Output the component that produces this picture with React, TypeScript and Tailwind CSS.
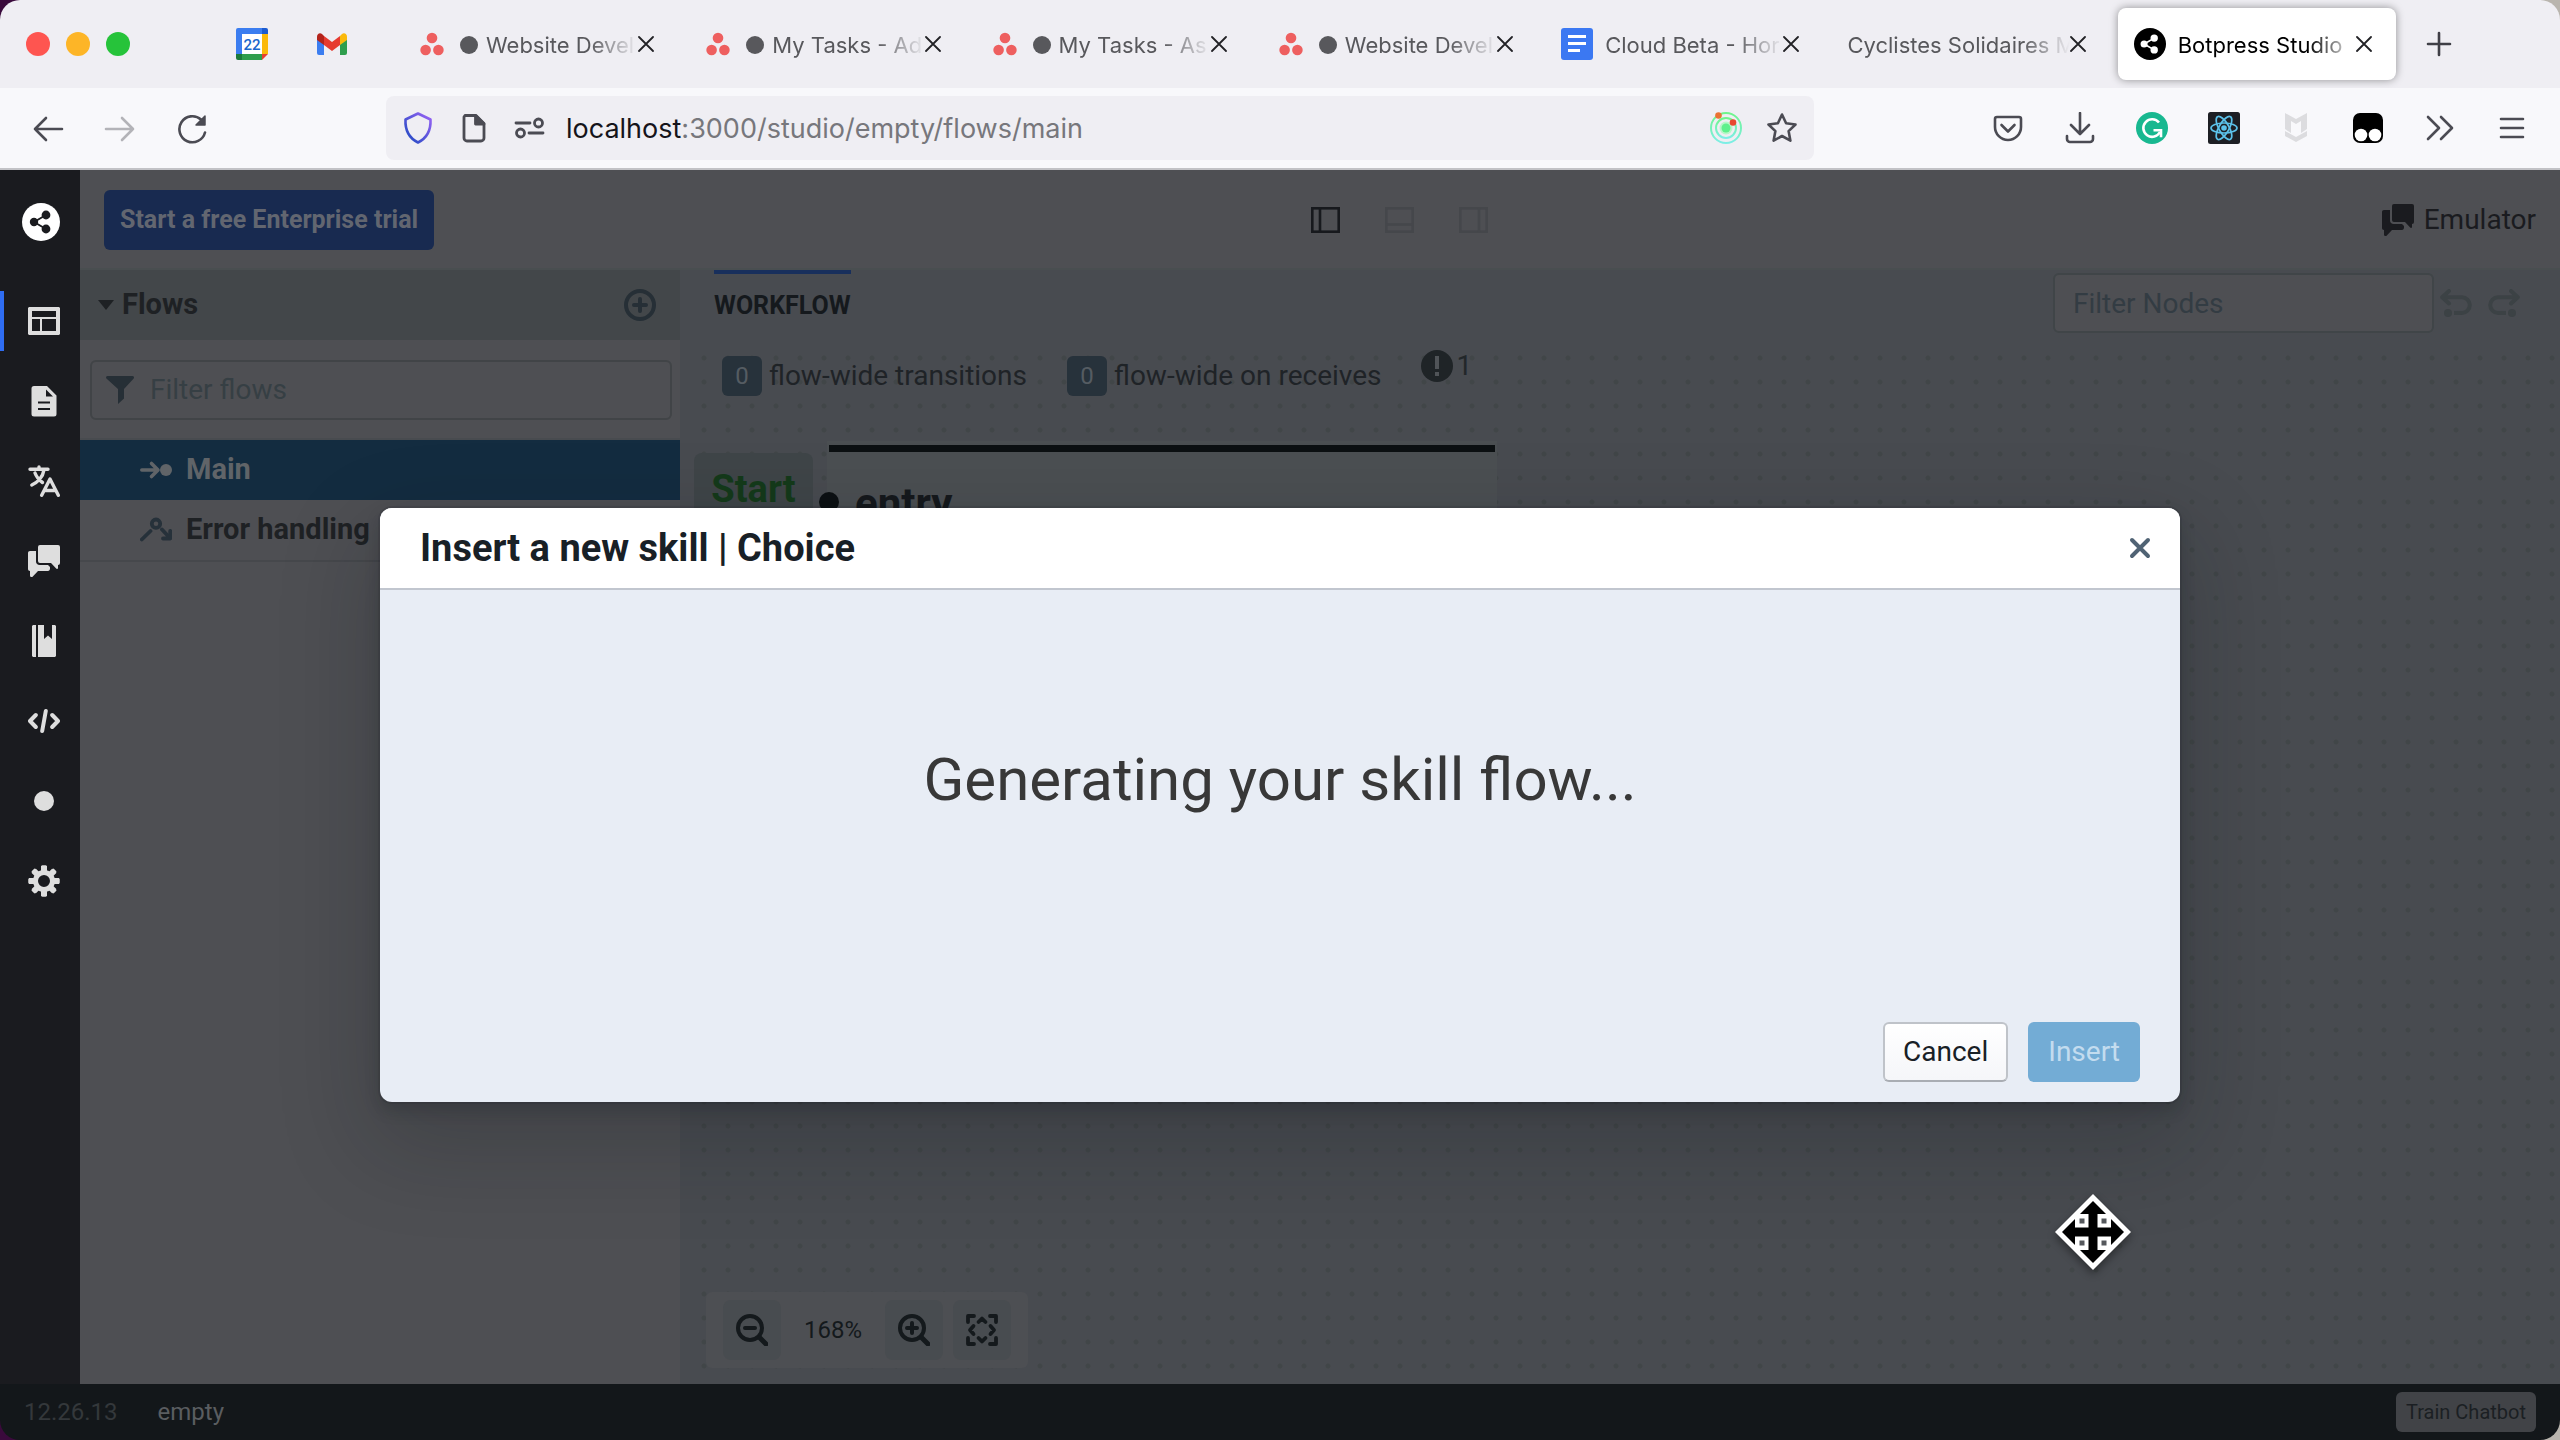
import React from 'react';

type IconProps = { className?: string };

/* ---------- browser icons ---------- */

const CalendarIcon = () => (
  <svg viewBox="0 0 32 32" className="size-8 shrink-0" aria-hidden="true">
    <path d="M2 0h24v6H6v20H0V2a2 2 0 0 1 2-2z" fill="#3b7df0" />
    <path d="M26 0h4a2 2 0 0 1 2 2v4h-6z" fill="#1c5bd0" />
    <path d="M26 6h6v20h-6z" fill="#fbb90a" />
    <path d="M6 26h20v6H6z" fill="#2f9e4d" />
    <path d="M0 26h6v6H2a2 2 0 0 1-2-2z" fill="#1b7a3b" />
    <path d="M26 26h6l-6 6z" fill="#e8402f" />
    <path d="M6 6h20v20H6z" fill="#fff" />
    <text x="16" y="21.5" textAnchor="middle" fontFamily="Roboto, sans-serif" fontSize="15" fontWeight="500" fill="#1a66cc">
      22
    </text>
  </svg>
);

const GmailIcon = () => (
  <svg viewBox="0 0 32 32" className="size-8 shrink-0" aria-hidden="true">
    <path d="M1 11l7 5v11H3a2 2 0 0 1-2-2z" fill="#3b7df0" />
    <path d="M31 11l-7 5v11h5a2 2 0 0 0 2-2z" fill="#2f9e4d" />
    <path d="M24 8l2-2c2-1.500 5-.5 5 3v3l-7 5z" fill="#fbb90a" />
    <path d="M8 8L6 6C4 4.500 1 5.500 1 9v3l7 5z" fill="#b3231b" />
    <path d="M8 8l8 6 8-6v9l-8 6-8-6z" fill="#e63a2f" />
  </svg>
);

const AsanaIcon = () => (
  <svg viewBox="0 0 32 32" className="size-8 shrink-0" fill="#ee5f5f" aria-hidden="true">
    <circle cx="16" cy="10" r="5.300" />
    <circle cx="9.600" cy="22" r="5.300" />
    <circle cx="22.400" cy="22" r="5.300" />
  </svg>
);

const DocsIcon = () => (
  <svg viewBox="0 0 32 32" className="size-8 shrink-0" aria-hidden="true">
    <rect width="32" height="32" rx="3" fill="#3b78f2" />
    <path d="M7 8.500h18M7 15.500h18M7 22.500h12" stroke="#fff" strokeWidth="3" />
  </svg>
);

const BotpressIcon = ({ className, disc, mark }: IconProps & { disc: string; mark: string }) => (
  <svg viewBox="0 0 38 38" className={className} aria-hidden="true">
    <circle cx="19" cy="19" r="19" fill={disc} />
    <path d="M12 19l12-7M12 19l12 7" stroke={mark} strokeWidth="2" />
    <circle cx="12" cy="19" r="4.200" fill={mark} />
    <circle cx="24" cy="12" r="4.400" fill={mark} />
    <circle cx="24" cy="26" r="4.400" fill={mark} />
  </svg>
);

const CloseIcon = () => (
  <svg viewBox="0 0 16 16" className="size-4" fill="none" stroke="#222226" strokeWidth="1.800" strokeLinecap="round" aria-hidden="true">
    <path d="M1 1l14 14M15 1L1 15" />
  </svg>
);

const Line = ({ children, className = 'size-8', width = 2.6 }: { children: React.ReactNode; className?: string; width?: number }) => (
  <svg
    viewBox="0 0 32 32"
    className={className}
    fill="none"
    stroke="currentColor"
    strokeWidth={width}
    strokeLinecap="round"
    strokeLinejoin="round"
    aria-hidden="true"
  >
    {children}
  </svg>
);

const ReactLogo = () => (
  <svg viewBox="0 0 32 32" className="size-8" aria-hidden="true">
    <rect width="32" height="32" rx="2.500" fill="#1d1f24" />
    <g fill="none" stroke="#5cc2ea" strokeWidth="1.700">
      <ellipse cx="16" cy="16" rx="13" ry="5" />
      <ellipse cx="16" cy="16" rx="13" ry="5" transform="rotate(60 16 16)" />
      <ellipse cx="16" cy="16" rx="13" ry="5" transform="rotate(120 16 16)" />
    </g>
    <circle cx="16" cy="16" r="2.800" fill="#5cc2ea" />
  </svg>
);

const GrammarlyIcon = () => (
  <svg viewBox="0 0 32 32" className="size-8" aria-hidden="true">
    <circle cx="16" cy="16" r="16" fill="#18b890" />
    <path d="M23 10.500a8.800 8.800 0 1 0 1 9.500" fill="none" stroke="#fff" strokeWidth="2.600" />
    <path d="M17.500 18.200H25v7" fill="none" stroke="#fff" strokeWidth="2.600" />
  </svg>
);

const RadarIcon = () => (
  <svg viewBox="0 0 32 32" className="size-8" aria-hidden="true">
    <defs>
      <linearGradient id="radar" x1="0" y1="0" x2="0" y2="1">
        <stop offset="0" stopColor="#6ff58a" />
        <stop offset="1" stopColor="#7deee6" />
      </linearGradient>
    </defs>
    <g fill="none" stroke="url(#radar)" strokeWidth="2">
      <circle cx="16" cy="16" r="15" />
      <circle cx="16" cy="16" r="10" />
    </g>
    <circle cx="16" cy="16" r="6.500" fill="#b8f7c9" />
    <circle cx="16" cy="16" r="4.500" fill="#5ff08c" />
    <circle cx="8.500" cy="3.500" r="3.300" fill="#ea7233" />
    <circle cx="23" cy="10.500" r="3.300" fill="#e8492f" />
  </svg>
);

const McAfeeIcon = () => (
  <svg viewBox="0 0 32 32" className="size-8" fill="#dcdcdf" aria-hidden="true">
    <path d="M5 1l11 6 11-6v16l-6 4V9l-5 3-5-3v12l-6-4z" />
    <path d="M5 19l11 6 11-6v5l-11 6-11-6z" />
  </svg>
);

const TamperIcon = () => (
  <svg viewBox="0 0 32 32" className="size-8" aria-hidden="true">
    <rect x="1" y="1" width="30" height="30" rx="7" fill="#000" />
    <circle cx="9" cy="23" r="6.300" fill="#fff" />
    <circle cx="23" cy="23" r="6.300" fill="#fff" />
  </svg>
);

/* ---------- studio icons ---------- */

const ChatIcon = ({ className = 'size-8' }: IconProps) => (
  <svg viewBox="0 0 16 16" className={className} fill="currentColor" aria-hidden="true">
    <path d="M6 0h9a1 1 0 0 1 1 1v8a1 1 0 0 1-1 1v1.500a.5.5 0 0 1-.9.3L11.500 9H6a1 1 0 0 1-1-1V1a1 1 0 0 1 1-1z" />
    <path d="M1 3h3v5.200C4 9.200 4.800 10 5.800 10H10l1 1v.9c0 .6-.4 1.100-1 1.100H5l-2.600 2.700c-.5.600-1.400.3-1.400-.5V13c-.6 0-1-.4-1-1V4c0-.6.4-1 1-1z" />
  </svg>
);

const LayoutIcon = () => (
  <svg viewBox="0 0 32 32" className="size-8" fill="currentColor" fillRule="evenodd" aria-hidden="true">
    <path d="M1 2h30l1 1v26l-1 1H1l-1-1V3zM4 6v6h24V6zM4 14v12h8V14zM14 14v12h14V14z" />
  </svg>
);

const DocumentIcon = () => (
  <svg viewBox="0 0 32 32" className="size-8" fill="currentColor" fillRule="evenodd" aria-hidden="true">
    <path d="M6 1h13l9.500 9.500V29a2.500 2.500 0 0 1-2.500 2.500H6A2.500 2.500 0 0 1 3.500 29V3.500A2.500 2.500 0 0 1 6 1zM18 4.500v7h7zM10 16.500v2h12v-2zM10 23v2h12v-2z" />
  </svg>
);

const TranslateIcon = () => (
  <Line width={3.4}>
    <path d="M2 4.300h18M11 2v2M15.800 5.500C15 12 9.500 17.500 3.800 20M7 8c1.500 4 4 7 7.500 9.500" />
    <path d="M13.700 30.300L22 14l8.300 16.300M17 25.500h10" />
  </Line>
);

const NotebookIcon = () => (
  <svg viewBox="0 0 32 32" className="size-8" fill="currentColor" aria-hidden="true">
    <path d="M5 0h3v32H5l-1-1V1z" />
    <path d="M10 0h6v14l4-3.500 4 3.500V0h3l1 1v30l-1 1H10z" />
  </svg>
);

const CodeIcon = () => (
  <Line width={4}>
    <path d="M7.800 10L2 16l5.800 6M24.200 10L30 16l-5.800 6M17.800 6l-3.600 20" />
  </Line>
);

const DotIcon = () => (
  <svg viewBox="0 0 32 32" className="size-8" fill="currentColor" aria-hidden="true">
    <circle cx="16" cy="16" r="10" />
  </svg>
);

const CogIcon = () => (
  <svg viewBox="0 0 32 32" className="size-8" fill="none" stroke="currentColor" aria-hidden="true">
    <circle cx="16" cy="16" r="8.500" strokeWidth="5" />
    <path
      d="M16 1v6M16 25v6M1 16h6M25 16h6M5.800 5.800l3.800 3.800M22.400 22.400l3.800 3.800M26.200 5.800l-3.800 3.800M9.600 22.400l-3.800 3.800"
      strokeWidth="6"
    />
    <path d="M14.500 1.500h3M14.500 30.500h3M1.500 14.500v3M30.500 14.500v3" strokeWidth="2.500" strokeLinecap="round" />
    <path d="M4.800 6.800l2-2M27.200 6.800l-2-2M4.800 25.200l2 2M27.200 25.200l-2 2" strokeWidth="2.500" strokeLinecap="round" />
  </svg>
);

const AddRingIcon = () => (
  <Line width={4}>
    <circle cx="16" cy="16" r="14" />
    <path d="M16 10v12M10 16h12" />
  </Line>
);

const FunnelIcon = () => (
  <svg viewBox="0 0 28 28" className="size-7 shrink-0" fill="currentColor" aria-hidden="true">
    <path d="M1.500 0h25a1.500 1.500 0 0 1 1.200 2.400L18 13v9.500L12 28V13L.4 2.400A1.500 1.500 0 0 1 1.500 0z" />
  </svg>
);

const StartFlowIcon = () => (
  <Line width={3.6}>
    <path d="M1.800 16H17M11.500 9.500L18 16l-6.500 6.500" />
    <circle cx="26" cy="16" r="6" fill="currentColor" stroke="none" />
  </Line>
);

const ErrorFlowIcon = () => (
  <Line width={3.8}>
    <circle cx="16" cy="9.700" r="4.200" />
    <path d="M1.800 25.500l8.700-8.500M22 15.500l7 7.500M30.200 17v7.500H23" />
  </Line>
);

const UndoIcon = ({ className = '' }: IconProps) => (
  <svg viewBox="0 0 32 28" className={`h-7 w-8 ${className}`} fill="none" stroke="currentColor" strokeWidth="4" strokeLinecap="round" strokeLinejoin="round" aria-hidden="true">
    <path d="M9 2L2.200 8.300 9 14.500M3 8.300h19a7.800 7.800 0 0 1 0 15.600" />
    <path d="M22 23.900h-8" strokeLinecap="butt" />
    <circle cx="8" cy="24" r="4" fill="currentColor" stroke="none" />
  </svg>
);

const PanelIcon = ({ side, className }: { side: 'left' | 'bottom' | 'right'; className: string }) => (
  <svg viewBox="0 0 29 26" className={`h-[26px] w-[29px] ${className}`} fill="none" stroke="currentColor" strokeWidth="2.600" aria-hidden="true">
    <rect x="1.300" y="1.300" width="26.400" height="23.400" />
    {side === 'left' && <path d="M9 1v24" />}
    {side === 'right' && <path d="M20 1v24" />}
    {side === 'bottom' && <path d="M1 17.500h27" />}
  </svg>
);

const ZoomIcon = ({ plus }: { plus?: boolean }) => (
  <Line width={4}>
    <circle cx="14" cy="14" r="12" />
    <path d={plus ? 'M9 14h10M14 9v10' : 'M9 14h10'} />
    <path d="M24 24l6 6" strokeWidth="5" />
  </Line>
);

const FitIcon = () => (
  <Line width={3.8}>
    <path d="M2 8V2h6M24 2h6v6M30 24v6h-6M8 30H2v-6" />
    <path d="M12.500 8L16 4.500 19.500 8M12.500 24l3.500 3.500 3.500-3.500M7.500 12L4 16l3.500 4M24.500 12l3.500 4-3.500 4" />
  </Line>
);

const MoveCursor = () => (
  <svg viewBox="-42 -42 84 90" className="h-[90px] w-[84px] drop-shadow-[0_4px_4px_rgba(0,0,0,0.4)]" aria-hidden="true">
    <path d="M0-38L38 0 0 38-38 0z" fill="#fff" />
    <path d="M0-31L31 0 0 31-31 0z" fill="#000" />
    <path d="M-18-18h13.500v13.500H-18zM4.500-18H18v13.500H4.500zM-18 4.500h13.500V18H-18zM4.500 4.500H18V18H4.500z" fill="#fff" />
    <path d="M-13.500-13.500h5v5h-5zM8.500-13.500h5v5h-5zM-13.500 8.500h5v5h-5zM8.500 8.500h5v5h-5z" fill="#55585c" />
  </svg>
);

/* ---------- browser chrome ---------- */

type Tab = { title: string; icon?: React.ReactNode; unread?: boolean; active?: boolean };

const tabs: Tab[] = [
  { title: 'Website Devel', icon: <AsanaIcon />, unread: true },
  { title: 'My Tasks - Ad', icon: <AsanaIcon />, unread: true },
  { title: 'My Tasks - As', icon: <AsanaIcon />, unread: true },
  { title: 'Website Devel', icon: <AsanaIcon />, unread: true },
  { title: 'Cloud Beta - Hor', icon: <DocsIcon /> },
  { title: 'Cyclistes Solidaires M' },
  { title: 'Botpress Studio', icon: <BotpressIcon className="size-8 shrink-0" disc="#000" mark="#fff" />, active: true },
];

const TabStrip = () => (
  <div className="flex h-[88px] items-center bg-[#efeef3]">
    <div className="flex w-[396px] shrink-0 items-center pl-[26px]">
      <div className="flex gap-4">
        <span className="size-6 rounded-full bg-[#fe5550]" />
        <span className="size-6 rounded-full bg-[#fdb527]" />
        <span className="size-6 rounded-full bg-[#26c33a]" />
      </div>
      <button className="ml-[106px]" aria-label="Calendar">
        <CalendarIcon />
      </button>
      <button className="ml-12" aria-label="Gmail">
        <GmailIcon />
      </button>
    </div>
    <div className="flex min-w-0 flex-1">
      {tabs.map((tab, i) => (
        <div
          key={i}
          className={
            tab.active
              ? 'mx-1 flex h-[72px] min-w-0 flex-1 items-center rounded-lg bg-white pr-6 pl-4 text-black shadow-[0_0_8px_rgba(0,0,0,0.4)]'
              : 'mx-1 flex h-[72px] min-w-0 flex-1 items-center pr-6 pl-4 text-[#58585c]'
          }
        >
          {tab.icon}
          <div
            className={
              tab.icon
                ? 'ml-3 flex min-w-0 flex-1 items-center gap-2 overflow-hidden pt-[2px] whitespace-nowrap [mask-image:linear-gradient(to_right,black_calc(100%-48px),transparent)]'
                : 'flex min-w-0 flex-1 items-center gap-2 overflow-hidden pt-[2px] whitespace-nowrap [mask-image:linear-gradient(to_right,black_calc(100%-48px),transparent)]'
            }
          >
            {tab.unread && <span className="size-[18px] shrink-0 rounded-full bg-[#58585c]" />}
            <span className="text-[22px] leading-8">{tab.title}</span>
          </div>
          <button className="shrink-0" aria-label={`Close ${tab.title}`}>
            <CloseIcon />
          </button>
        </div>
      ))}
    </div>
    <button className="mr-[105px] ml-[23px] text-[#3f3f46]" aria-label="New tab">
      <Line>
        <path d="M16 5v22M5 16h22" />
      </Line>
    </button>
  </div>
);

const AddressBar = () => (
  <div className="flex h-[82px] items-center border-b-2 border-[#c2c2c6] bg-[#f8f8fb] text-[#4b4b53]">
    <div className="flex w-[386px] shrink-0 items-center gap-10 pl-8">
      <button aria-label="Back">
        <Line>
          <path d="M3 17h27M14 6L3 17l11 11" />
        </Line>
      </button>
      <button className="text-[#b3b3b8]" aria-label="Forward">
        <Line>
          <path d="M29 17H2M18 6l11 11-11 11" />
        </Line>
      </button>
      <button aria-label="Reload">
        <Line>
          <path d="M29 20.500A13 13 0 1 1 25 7.500" />
          <path d="M29 4v9h-9z" fill="currentColor" strokeWidth="1.500" />
        </Line>
      </button>
    </div>
    <div className="flex h-16 min-w-0 flex-1 items-center rounded-lg bg-[#efeef3] px-4">
      <svg viewBox="0 0 32 32" className="size-8 shrink-0" fill="none" strokeWidth="2.600" strokeLinejoin="round" aria-hidden="true">
        <defs>
          <linearGradient id="shield" x1="0" y1="1" x2="1" y2="0">
            <stop offset="0" stopColor="#1b49c0" />
            <stop offset="1" stopColor="#9a63f5" />
          </linearGradient>
        </defs>
        <path d="M16 1.500l12.500 6C29 18 25 26 16 30.500 7 26 3 18 3.500 7.500z" stroke="url(#shield)" />
      </svg>
      <svg viewBox="0 0 32 32" className="ml-6 size-8 shrink-0" fill="none" stroke="currentColor" strokeWidth="2.800" strokeLinejoin="round" aria-hidden="true">
        <path d="M7 3.500h11l8 8V26a3 3 0 0 1-3 3H9a3 3 0 0 1-3-3V5z" />
        <path d="M17.500 3.500V12H26z" fill="currentColor" />
      </svg>
      <span className="ml-6 shrink-0">
        <Line width={2.8}>
          <path d="M2 11h14M15 21h14" />
          <circle cx="24.500" cy="11" r="4" />
          <circle cx="6.500" cy="21" r="4" />
        </Line>
      </span>
      <p className="ml-5 min-w-0 flex-1 truncate pt-[2px] text-[27px] leading-10 text-[#77777c]">
        <span className="text-[#15141a]">localhost</span>:3000/studio/empty/flows/main
      </p>
      <RadarIcon />
      <button className="ml-6" aria-label="Bookmark this page">
        <Line>
          <path d="M16 2.500l4.100 8.800 9.400 1.200-6.900 6.600 1.800 9.600L16 24l-8.400 4.700 1.800-9.600-6.900-6.600 9.400-1.200z" />
        </Line>
      </button>
    </div>
    <div className="flex w-[746px] shrink-0 items-center justify-end gap-10 pr-8">
      <button aria-label="Save to Pocket">
        <Line>
          <path d="M5 5h22a2 2 0 0 1 2 2v8a13 13 0 0 1-26 0V7a2 2 0 0 1 2-2z" />
          <path d="M9.500 13l6.500 6.500 6.500-6.500" />
        </Line>
      </button>
      <button aria-label="Downloads">
        <Line>
          <path d="M16 1v20M7 13l9 9 9-9M3 24v3a3 3 0 0 0 3 3h20a3 3 0 0 0 3-3v-3" />
        </Line>
      </button>
      <button aria-label="Grammarly">
        <GrammarlyIcon />
      </button>
      <button aria-label="React developer tools">
        <ReactLogo />
      </button>
      <button aria-label="McAfee">
        <McAfeeIcon />
      </button>
      <button aria-label="Tampermonkey">
        <TamperIcon />
      </button>
      <button aria-label="More tools">
        <Line>
          <path d="M4 5l11 11L4 27M17 5l11 11-11 11" />
        </Line>
      </button>
      <button aria-label="Open menu">
        <Line>
          <path d="M5 7h22M5 16h22M5 25h22" />
        </Line>
      </button>
    </div>
  </div>
);

/* ---------- studio ---------- */

const railItems = [
  { label: 'Flows', icon: <LayoutIcon />, active: true },
  { label: 'Content', icon: <DocumentIcon /> },
  { label: 'Translations', icon: <TranslateIcon /> },
  { label: 'Q&A', icon: <ChatIcon /> },
  { label: 'Library', icon: <NotebookIcon /> },
  { label: 'Code editor', icon: <CodeIcon /> },
  { label: 'Status', icon: <DotIcon /> },
  { label: 'Settings', icon: <CogIcon /> },
];

const Rail = () => (
  <nav className="flex w-20 shrink-0 flex-col bg-[#1a1b1f] pt-[33px] text-[#dedede]">
    <button className="ml-[22px] self-start" aria-label="Botpress home">
      <BotpressIcon className="size-[38px]" disc="#fff" mark="#1a1b1f" />
    </button>
    <ul className="mt-[50px] flex flex-col gap-5">
      {railItems.map((item) => (
        <li key={item.label}>
          <button
            aria-label={item.label}
            className={
              item.active
                ? 'flex h-[60px] w-full items-center border-l-4 border-[#2f6df2] pl-6'
                : 'flex h-[60px] w-full items-center border-l-4 border-transparent pl-6'
            }
          >
            {item.icon}
          </button>
        </li>
      ))}
    </ul>
  </nav>
);

const StudioHeader = () => (
  <header className="flex h-[100px] items-center justify-between border-b-2 border-[#494e50] bg-[#4e4f53] pt-[2px] pr-6 pl-6">
    <button className="h-[60px] rounded-md bg-[#182a50] px-4 text-[25px] font-bold text-[#626670]">Start a free Enterprise trial</button>
    <div className="flex gap-[45px]">
      <button aria-label="Toggle left panel">
        <PanelIcon side="left" className="text-[#17191d]" />
      </button>
      <button aria-label="Toggle bottom panel">
        <PanelIcon side="bottom" className="text-[#45474b]" />
      </button>
      <button aria-label="Toggle right panel">
        <PanelIcon side="right" className="text-[#45474b]" />
      </button>
    </div>
    <button className="flex items-center gap-[10px] pl-4 text-[28px] text-[#1a1b1f]">
      <ChatIcon />
      Emulator
    </button>
  </header>
);

const FlowList = () => (
  <aside className="w-[600px] shrink-0 bg-[#4e4f53]">
    <div className="flex h-[70px] items-center bg-[#43474a] pr-6 pl-[18px]">
      <svg viewBox="0 0 16 10" className="h-[10px] w-4" fill="#1e2124" aria-hidden="true">
        <path d="M0 0h16L8 10z" />
      </svg>
      <h2 className="ml-2 flex-1 text-[29px] font-bold text-[#1e2124]">Flows</h2>
      <button className="text-[#262f36]" aria-label="Add flow">
        <AddRingIcon />
      </button>
    </div>
    <div className="border-b-2 border-[#484b4f] pt-5 pr-2 pb-[18px] pl-[10px]">
      <label className="flex h-[60px] items-center rounded-md border-2 border-[#414447] pl-[14px] text-[#262f36]">
        <FunnelIcon />
        <input
          type="text"
          aria-label="Filter flows"
          placeholder="Filter flows"
          className="ml-4 min-w-0 flex-1 bg-transparent text-[28px] outline-none placeholder:text-[#363f44]"
        />
      </label>
    </div>
    <ul className="text-[29px] font-bold">
      <li>
        <a href="#main" className="flex h-[60px] items-center gap-[14px] bg-[#132c40] pl-[60px] text-[#606468]">
          <StartFlowIcon />
          Main
        </a>
      </li>
      <li className="border-b-2 border-[#46484c]">
        <a href="#error" className="flex h-[60px] items-center gap-[14px] pl-[60px] text-[#1e2124]">
          <span className="text-[#26313a]">
            <ErrorFlowIcon />
          </span>
          Error handling
        </a>
      </li>
    </ul>
  </aside>
);

const Badge = ({ label }: { label: string }) => (
  <button className="flex h-10 items-center gap-[7px] text-[28px] text-[#1f2327]">
    <span className="flex size-10 items-center justify-center rounded-md bg-[#27323b] text-2xl text-[#555c62]">0</span>
    {label}
  </button>
);

const Canvas = () => (
  <main className="relative flex min-w-0 flex-1 flex-col bg-[#484b50]">
    <div className="flex h-20 items-start justify-between pr-10 pl-[34px]">
      <button className="h-[68px] border-t-4 border-[#182f5c] text-[25px] font-bold text-[#15191d]">WORKFLOW</button>
      <div className="flex items-center pt-[3px]">
        <input
          type="text"
          aria-label="Filter nodes"
          placeholder="Filter Nodes"
          className="h-[60px] w-[381px] rounded-md border-2 border-[#404548] bg-[#4e4f53] px-[18px] text-[28px] outline-none placeholder:text-[#333c43]"
        />
        <button className="ml-[6px] text-[#3c4245]" aria-label="Undo">
          <UndoIcon />
        </button>
        <button className="ml-4 text-[#3c4245]" aria-label="Redo">
          <UndoIcon className="-scale-x-100" />
        </button>
      </div>
    </div>
    <div className="relative ml-3 flex-1 bg-[radial-gradient(circle,#414648_2px,transparent_3px)] bg-[size:24px_24px] bg-[position:0_-4px]">
      <div className="flex items-start pl-[30px]">
        <div className="flex gap-10 pt-[6px]">
          <Badge label="flow-wide transitions" />
          <Badge label="flow-wide on receives" />
        </div>
        <button className="ml-[39px] flex h-8 items-center gap-1 text-[28px] text-[#22272a]">
          <svg viewBox="0 0 32 32" className="size-8" aria-hidden="true">
            <circle cx="16" cy="16" r="16" fill="#1f2427" />
            <path d="M16 6v13M16 22v4" stroke="#505458" strokeWidth="4" />
          </svg>
          1
        </button>
      </div>

      <div className="absolute top-[103px] left-[2px] flex h-[90px] w-[119px] justify-center rounded-lg bg-[#3f4548]">
        <span className="pt-4 text-[38px] leading-10 font-bold text-[#143a1a]">Start</span>
      </div>
      <section className="absolute top-[91px] left-[135px] h-[400px] w-[670px] bg-[#4b4f52] px-[2px] pt-1">
        <div className="h-[7px] bg-[#0c1012]" />
        <h3 className="pt-7 pl-[26px] text-[42px] leading-[48px] font-bold text-[#15191c]">entry</h3>
      </section>
      <span className="absolute top-[142px] left-[127px] size-5 rounded-full bg-[#0c1012]" />

      <div className="absolute bottom-4 left-[14px] flex h-[76px] items-center rounded-md bg-[#4d4f53] px-[17px] text-[#14191c]">
        <button className="flex h-[60px] w-[58px] items-center justify-center rounded-lg bg-[#484c50]" aria-label="Zoom out">
          <ZoomIcon />
        </button>
        <span className="w-[104px] text-center text-2xl">168%</span>
        <button className="flex h-[60px] w-[58px] items-center justify-center rounded-lg bg-[#484c50]" aria-label="Zoom in">
          <ZoomIcon plus />
        </button>
        <button className="ml-[10px] flex h-[60px] w-[58px] items-center justify-center rounded-lg bg-[#484c50]" aria-label="Fit to screen">
          <FitIcon />
        </button>
      </div>
    </div>
  </main>
);

const StatusBar = () => (
  <footer className="flex h-14 shrink-0 items-center bg-[#13171a] pr-6 pl-6 text-2xl">
    <span className="text-[#34383b]">12.26.13</span>
    <span className="ml-10 flex-1 text-[#5a5d60]">empty</span>
    <button className="h-10 rounded-md bg-[#414347] px-[10px] text-xl text-[#1b1f23]">Train Chatbot</button>
  </footer>
);

const SkillDialog = () => (
  <div className="absolute inset-0 flex items-center justify-center">
    <div
      role="dialog"
      aria-labelledby="skill-title"
      className="flex w-[1800px] flex-col overflow-hidden rounded-xl bg-[#e8edf5] shadow-[0_0_0_2px_rgba(16,22,26,0.1),0_8px_16px_rgba(16,22,26,0.2),0_36px_92px_12px_rgba(16,22,26,0.2)]"
    >
      <div className="flex h-[82px] items-center justify-between border-b-2 border-[#c1c6cf] bg-white pr-6 pl-10">
        <h1 id="skill-title" className="text-[38px] font-bold text-[#182026]">
          Insert a new skill | Choice
        </h1>
        <button className="text-[#506374]" aria-label="Close">
          <Line width={4}>
            <path d="M8 8l16 16M24 8L8 24" />
          </Line>
        </button>
      </div>
      <p className="pt-[150px] text-center text-[60px] leading-[80px] text-[#383838]">Generating your skill flow...</p>
      <div className="flex justify-end gap-5 pt-[202px] pr-10 pb-5 text-[28px]">
        <button className="h-[60px] rounded-md border-2 border-[#bfc3c9] border-b-[#a9adb3] bg-gradient-to-b from-white to-[#f5f6f9] px-[18px] text-[#182026]">
          Cancel
        </button>
        <button disabled className="h-[60px] rounded-md bg-[#73acd5] px-5 text-[#c3dcef]">
          Insert
        </button>
      </div>
    </div>
    <span className="absolute top-[1020px] right-[425px]">
      <MoveCursor />
    </span>
  </div>
);

export default function App() {
  return (
    <div className="h-screen bg-gradient-to-r from-[#3a0a3c] from-50% to-[#b9b5ae] to-50%">
      <div className="flex h-full flex-col overflow-hidden rounded-[20px] font-['Inter',sans-serif]">
        <TabStrip />
        <AddressBar />
        <div className="relative flex min-h-0 flex-1 flex-col overflow-hidden font-['Roboto',sans-serif]">
          <div className="flex min-h-0 flex-1">
            <Rail />
            <div className="flex min-w-0 flex-1 flex-col">
              <StudioHeader />
              <div className="flex min-h-0 flex-1">
                <FlowList />
                <Canvas />
              </div>
            </div>
          </div>
          <StatusBar />
          <SkillDialog />
        </div>
      </div>
    </div>
  );
}
